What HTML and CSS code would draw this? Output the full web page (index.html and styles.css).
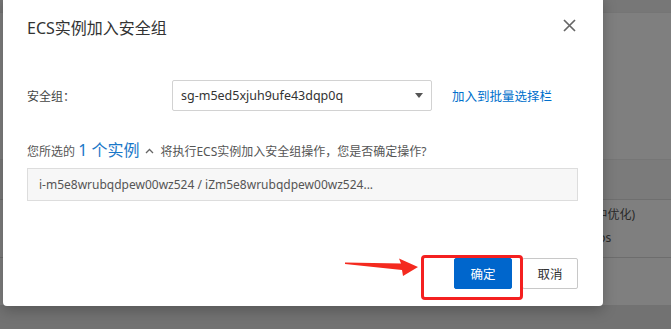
FILE: index.html
```html
<!DOCTYPE html>
<html lang="zh-CN">

<head>
    <meta charset="UTF-8" />
    <meta name="viewport" content="width=device-width, initial-scale=1.0" />
    <title>ECS实例加入安全组</title>
    <link rel="stylesheet" href="styles.css">
</head>

<body>

    <!-- Page behind the mask -->
    <div class="page">
        <div class="topbar"></div>
        <div class="page-gap"></div>
        <div class="thead"></div>
        <div class="trow">
            <div class="spec">
                <span>计算型(中优化)</span>
                <span class="spec-sub">centos</span>
            </div>
        </div>
    </div>

    <!-- Dialog -->
    <div class="modal">
        <div class="modal-header">
            <h2 class="modal-title">ECS实例加入安全组</h2>
            <button class="close-btn" aria-label="关闭">
                <svg width="13" height="13" viewBox="0 0 13 13">
                    <path d="M1 1 L12 12 M12 1 L1 12" stroke="#666" stroke-width="1.7" fill="none" />
                </svg>
            </button>
        </div>

        <div class="form-row">
            <label class="form-label">安全组：</label>
            <div class="select">
                <span>sg-m5ed5xjuh9ufe43dqp0q</span>
                <svg width="8" height="5" viewBox="0 0 8 5">
                    <path d="M0 0 H8 L4 5 Z" fill="#555" />
                </svg>
            </div>
            <a class="link" href="#">加入到批量选择栏</a>
        </div>

        <p class="message">您所选的 <a class="count" href="#">1 个实例</a><svg class="chevron" width="9" height="6" viewBox="0 0 9 6"><path d="M1 5 L4.5 1.5 L8 5" stroke="#666" stroke-width="1.3" fill="none" /></svg>将执行ECS实例加入安全组操作，您是否确定操作?</p>

        <div class="instances">i-m5e8wrubqdpew00wz524 / iZm5e8wrubqdpew00wz524...</div>

        <div class="modal-footer">
            <button class="btn btn-primary">确定</button>
            <button class="btn">取消</button>
        </div>
    </div>

    <!-- Annotation -->
    <svg class="arrow" width="85" height="30" viewBox="0 0 85 30">
        <polygon points="5,12.5 61,13.5 59,8.5 78,17 63,26 62,20 5,14" fill="#f42a1f" />
    </svg>
    <div class="highlight"></div>

</body>

</html>
```

FILE: styles.css
```css
* {
    box-sizing: border-box;
    margin: 0;
    padding: 0;
}

body {
    position: relative;
    width: 671px;
    height: 329px;
    overflow: hidden;
    background-color: #727272;
    font-family: 'Noto Sans', 'Noto Sans CJK SC', sans-serif;
    font-size: 12px;
    color: #555;
}

/* Page behind the mask */

.page {
    height: 305px;
    background-color: #7f7f7f;
}

.topbar {
    height: 13px;
    background-color: #777;
    border-bottom: 1px solid #757575;
}

.page-gap {
    height: 146px;
}

.thead {
    height: 41px;
    background-color: #7b7b7b;
    border-top: 1px solid #767676;
    border-bottom: 1px solid #6f6f6f;
}

.trow {
    height: 58px;
    border-bottom: 1px solid #6d6d6d;
    display: flex;
    justify-content: flex-end;
}

.spec {
    width: 115px;
    padding-top: 5px;
    display: flex;
    flex-direction: column;
    gap: 3px;
    font-size: 12px;
    line-height: 20px;
    color: #2a2a2a;
    white-space: nowrap;
}

.spec-sub {
    font-size: 12px;
    padding-left: 18px;
}

/* Dialog */

.modal {
    position: absolute;
    top: -4px;
    left: 3px;
    width: 600px;
    height: 310px;
    padding: 4px 25px 0 24px;
    background-color: #fff;
    border-radius: 4px;
    box-shadow: 0 4px 14px rgba(0, 0, 0, 0.25);
}

.modal-header {
    display: flex;
    justify-content: space-between;
    align-items: center;
    padding-top: 18px;
    height: 38px;
}

.modal-title {
    font-size: 16px;
    font-weight: normal;
    line-height: 20px;
    color: #333;
}

.close-btn {
    background: none;
    border: none;
    width: 13px;
    height: 13px;
    margin-right: 2px;
    margin-top: -6px;
    display: flex;
    cursor: pointer;
}

.form-row {
    display: flex;
    align-items: center;
    margin-top: 42px;
}

.form-label {
    width: 145px;
    font-size: 12px;
    color: #444;
}

.select {
    width: 260px;
    height: 31px;
    border: 1px solid #d2d2d2;
    border-radius: 2px;
    display: flex;
    align-items: center;
    justify-content: space-between;
    padding: 0 8px 0 8px;
    font-size: 12.5px;
    color: #333;
}

.link {
    margin-left: 20px;
    font-size: 12.5px;
    color: #0070cc;
    text-decoration: none;
}

.message {
    margin-top: 28px;
    height: 22px;
    line-height: 22px;
    font-size: 12px;
    color: #555;
    white-space: nowrap;
}

.count {
    font-size: 16px;
    color: #1a78c8;
    text-decoration: none;
}

.chevron {
    margin: 0 6px 0 6px;
    vertical-align: 2px;
}

.instances {
    margin-top: 7px;
    height: 33px;
    border: 1px solid #ddd;
    background-color: #f7f7f7;
    padding-left: 11px;
    display: flex;
    align-items: center;
    font-size: 12px;
    color: #555;
}

.modal-footer {
    display: flex;
    justify-content: flex-end;
    gap: 10px;
    margin-top: 57px;
}

.btn {
    width: 56px;
    height: 31px;
    border: 1px solid #c8c8c8;
    border-radius: 2px;
    background-color: #fff;
    color: #333;
    font-family: inherit;
    font-size: 12.5px;
    cursor: pointer;
}

.btn-primary {
    width: 58px;
    border-color: #0066cc;
    background-color: #0066cc;
    color: #fff;
}

/* Annotation */

.arrow {
    position: absolute;
    left: 340px;
    top: 250px;
}

.highlight {
    position: absolute;
    left: 421px;
    top: 255px;
    width: 102px;
    height: 45px;
    border: 3px solid #f42020;
    border-radius: 4px;
}
```
